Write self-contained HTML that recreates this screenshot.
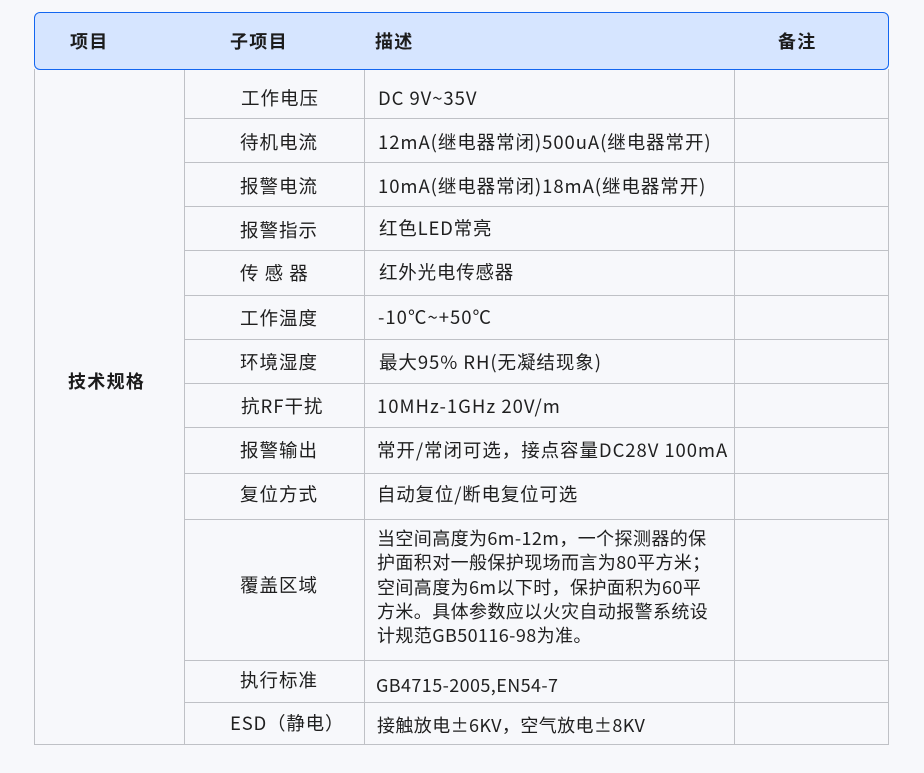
<!DOCTYPE html>
<html lang="zh"><head><meta charset="utf-8"><style>
html,body{margin:0;padding:0}
body{width:924px;height:773px;background:#f7f8fb;position:relative;overflow:hidden;font-family:"Noto Sans CJK SC",sans-serif;color:#1f1f1f}
.h{position:absolute;left:34px;top:12px;width:853px;height:56px;background:#d6e5ff;border:1px solid #1366f0;border-radius:6px}
.v,.l{position:absolute;background:#bfc1c6}
.v{width:1px}.l{height:1px}
.t{position:absolute;white-space:nowrap;font-size:18.5px;line-height:26px;letter-spacing:.8px}
.m{letter-spacing:.93px}
.w{letter-spacing:1px}
.n{font-size:18px;letter-spacing:.4px}
.c{letter-spacing:1px}
.b{font-weight:700;font-size:18px;letter-spacing:1.3px;color:#1c1c1c}
</style></head><body>
<div class="h"></div>
<div class="v" style="left:34px;top:69px;height:676px"></div>
<div class="v" style="left:184px;top:70px;height:675px"></div>
<div class="v" style="left:364px;top:70px;height:675px"></div>
<div class="v" style="left:734px;top:70px;height:675px"></div>
<div class="v" style="left:888px;top:69px;height:676px"></div>
<div class="l" style="left:184px;top:118px;width:705px"></div>
<div class="l" style="left:184px;top:162px;width:705px"></div>
<div class="l" style="left:184px;top:206px;width:705px"></div>
<div class="l" style="left:184px;top:250px;width:705px"></div>
<div class="l" style="left:184px;top:295px;width:705px"></div>
<div class="l" style="left:184px;top:339px;width:705px"></div>
<div class="l" style="left:184px;top:383px;width:705px"></div>
<div class="l" style="left:184px;top:427px;width:705px"></div>
<div class="l" style="left:184px;top:473px;width:705px"></div>
<div class="l" style="left:184px;top:519px;width:705px"></div>
<div class="l" style="left:184px;top:660px;width:705px"></div>
<div class="l" style="left:184px;top:702px;width:705px"></div>
<div class="l" style="left:34px;top:744px;width:855px"></div>

<div class="t b" style="left:70px;top:28px">项目</div>
<div class="t b" style="left:230px;top:28px">子项目</div>
<div class="t b" style="left:375px;top:28px">描述</div>
<div class="t b" style="left:778px;top:28px">备注</div>
<div class="t b" style="left:68px;top:368px">技术规格</div>

<div class="t c" style="left:241px;top:85px">工作电压</div>
<div class="t c" style="left:240px;top:129px">待机电流</div>
<div class="t c" style="left:240px;top:173px">报警电流</div>
<div class="t c" style="left:240px;top:217px">报警指示</div>
<div class="t c" style="left:240px;top:260px">传 感 器</div>
<div class="t c" style="left:240px;top:305px">工作温度</div>
<div class="t c" style="left:240px;top:349px">环境湿度</div>
<div class="t c" style="left:241px;top:393px">抗RF干扰</div>
<div class="t c" style="left:240px;top:437px">报警输出</div>
<div class="t c" style="left:240px;top:481px">复位方式</div>
<div class="t c" style="left:240px;top:572px">覆盖区域</div>
<div class="t c" style="left:240px;top:667px">执行标准</div>
<div class="t" style="left:230px;top:710px">ESD（静电）</div>

<div class="t m" style="left:378px;top:85px">DC 9V~35V</div>
<div class="t m" style="left:378px;top:129px">12mA(继电器常闭)500uA(继电器常开)</div>
<div class="t m" style="left:378px;top:173px">10mA(继电器常闭)18mA(继电器常开)</div>
<div class="t" style="left:379px;top:215px">红色LED常亮</div>
<div class="t" style="left:379px;top:259px">红外光电传感器</div>
<div class="t w" style="left:378px;top:304px">-10℃~+50℃</div>
<div class="t m" style="left:379px;top:349px">最大95% RH(无凝结现象)</div>
<div class="t w" style="left:377px;top:393px">10MHz-1GHz 20V/m</div>
<div class="t m" style="left:377px;top:437px">常开/常闭可选，接点容量DC28V 100mA</div>
<div class="t" style="left:377px;top:481px">自动复位/断电复位可选</div>
<div class="t n" style="left:377px;top:525px">当空间高度为6m-12m，一个探测器的保</div>
<div class="t n" style="left:377px;top:549px">护面积对一般保护现场而言为80平方米；</div>
<div class="t n" style="left:377px;top:574px">空间高度为6m以下时，保护面积为60平</div>
<div class="t n" style="left:377px;top:598px">方米。具体参数应以火灾自动报警系统设</div>
<div class="t n" style="left:377px;top:622px">计规范GB50116-98为准。</div>
<div class="t n" style="left:376px;top:672px">GB4715-2005,EN54-7</div>
<div class="t n" style="left:377px;top:712px">接触放电±6KV，空气放电±8KV</div>
</body></html>
